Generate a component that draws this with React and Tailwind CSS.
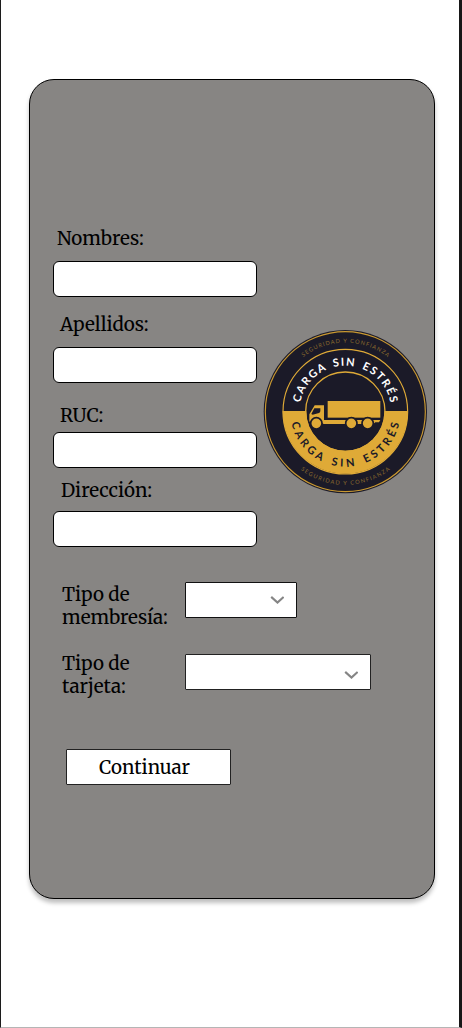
import React from "react";

function Label({ children, className = "" }) {
  return (
    <label className={`block h-[23px] pt-px whitespace-nowrap leading-[23px] ${className}`}>
      {children}
    </label>
  );
}

function Field({ className = "" }) {
  return (
    <input
      type="text"
      className={`ml-[23px] block h-9 w-[204px] rounded-md border-[1.4px] border-black bg-white px-2 outline-none ${className}`}
    />
  );
}

function Chevron({ className = "" }) {
  return (
    <svg viewBox="0 0 14 8" fill="none" className={`h-2 w-3.5 ${className}`}>
      <path d="M1.2 0.9 L7.5 6.6 L13.6 0.9" stroke="#858585" strokeWidth="2.1" />
    </svg>
  );
}

function Logo() {
  return (
    <svg viewBox="0 0 516 516" className="h-[172px] w-[172px]">
      <defs>
        <path id="top" d="M118 260 A138 138 0 0 1 394 260" />
        <path id="bottom" d="M91 260 A165 165 0 0 0 421 260" />
        <path id="outerTop" d="M49 260 A207 207 0 0 1 463 260" />
        <path id="outerBottom" d="M36 260 A220 220 0 0 0 476 260" />
      </defs>
      <circle cx="256" cy="260" r="245" fill="#1b1a28" />
      <circle cx="256" cy="260" r="240" fill="none" stroke="#c89831" strokeWidth="3.5" />
      <path d="M68 258 A188 188 0 0 0 444 258 Z" fill="#dfaa37" />
      <circle cx="256" cy="260" r="187" fill="none" stroke="#dfaa37" strokeWidth="3.5" />
      <circle cx="256" cy="260" r="117" fill="#1b1a28" />
      <circle cx="256" cy="260" r="119" fill="none" stroke="#dfaa37" strokeWidth="4" />
      <g fontFamily="Lato, sans-serif" textAnchor="middle">
        <g fontSize="33" fontWeight="700" wordSpacing="6">
          <text fill="#ffffff" letterSpacing="4.8">
            <textPath href="#top" startOffset="50.5%">CARGA SIN ESTRÉS</textPath>
          </text>
          <text fill="#1b1a28" letterSpacing="9.4">
            <textPath href="#bottom" startOffset="50.8%">CARGA SIN ESTRÉS</textPath>
          </text>
        </g>
        <g fontSize="17" fill="#8b6a2d">
          <text letterSpacing="3">
            <textPath href="#outerTop" startOffset="50.3%">SEGURIDAD Y CONFIANZA</textPath>
          </text>
          <text letterSpacing="3.8">
            <textPath href="#outerBottom" startOffset="50.3%">SEGURIDAD Y CONFIANZA</textPath>
          </text>
        </g>
      </g>
      <g fill="#dfaa37">
        <rect x="203" y="228" width="158" height="50" />
        <path
          fillRule="evenodd"
          d="M164 241 H192 V285 H361 L357 292 H346 L340 297 H191 L185 293 Q183 278 169 278 Q155 278 151 292 L148 289 V268 Z M163 250 L154 267 L158 269 L177 264 Q181 262 181 258 V250 Z"
        />
        <g stroke="#1b1a28" strokeWidth="5">
          <circle cx="169" cy="295" r="17" />
          <circle cx="274" cy="295" r="17" />
          <circle cx="323" cy="295" r="17" />
        </g>
      </g>
    </svg>
  );
}

export default function App() {
  return (
    <main className="flex h-[1028px] w-[462px] items-start border-r-[3px] border-b border-l border-r-[#171717] border-b-[#b5b5b5] border-l-[#1c1c1c] bg-white pt-[79px] pl-7 font-['Merriweather','DejaVu_Serif_Condensed','DejaVu_Serif',serif] text-[18.8px] text-black">
      <form className="h-[820px] w-[406px] rounded-[25px] border-[1.4px] border-black bg-[#878583] shadow-[0_4px_4px_rgba(0,0,0,0.25)]">
        <div className="flex items-start">
          <div className="w-[231px] shrink-0 pt-[146px]">
            <Label className="ml-[27px]">Nombres:</Label>
            <Field className="mt-3" />
            <Label className="mt-[15px] ml-[30px]">Apellidos:</Label>
            <Field className="mt-3" />
            <Label className="mt-5 ml-[30px]">RUC:</Label>
            <Field className="mt-1.5" />
            <Label className="mt-2.5 ml-[31px]">Dirección:</Label>
            <Field className="mt-2.5" />
          </div>
          <div className="-ml-px shrink-0 pt-[245px]">
            <Logo />
          </div>
        </div>
        <div className="mt-[35px] flex h-[46px] items-start pl-8">
          <label className="w-[123px] pt-px leading-[23px]">
            Tipo de<br />membresía:
          </label>
          <button
            type="button"
            className="flex h-9 w-28 justify-end rounded-[1px] border-[1.4px] border-[#111] bg-white pt-[13px] pr-3"
          >
            <Chevron />
          </button>
        </div>
        <div className="mt-[23px] flex h-[46px] items-start pl-8">
          <label className="w-[123px] pt-px leading-[23px]">
            Tipo de<br />tarjeta:
          </label>
          <button
            type="button"
            className="mt-[3px] flex h-9 w-[186px] justify-end rounded-[1px] border-[1.4px] border-[#222] bg-white pt-4 pr-3"
          >
            <Chevron />
          </button>
        </div>
        <button
          type="submit"
          className="mt-[52px] ml-9 block h-9 w-[165px] rounded-[1px] border-[1.4px] border-[#222] bg-white pt-px pl-8 text-left leading-[34px]"
        >
          Continuar
        </button>
      </form>
    </main>
  );
}
